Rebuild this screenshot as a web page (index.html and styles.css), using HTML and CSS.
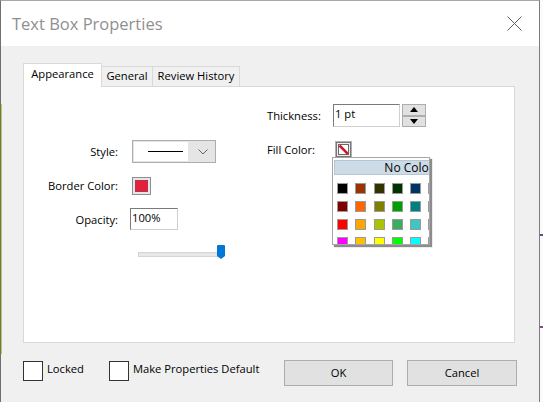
FILE: index.html
```html
<!DOCTYPE html>
<html>
<head>
<meta charset="utf-8">
<title>Text Box Properties</title>
<link rel="stylesheet" href="styles.css">
</head>
<body>
<div class="window">
  <div class="edge-green"></div>
  <header class="titlebar">
    <span class="title">Text Box Properties</span>
    <svg class="close" width="15" height="15" viewBox="0 0 15 15"><path d="M0.5 0.5 L14.5 14.5 M14.5 0.5 L0.5 14.5" stroke="#5c5c5c" stroke-width="1" fill="none"/></svg>
  </header>
  <div class="body">
    <div class="tabs">
      <div class="tab active">Appearance</div>
      <div class="tab t-general">General</div>
      <div class="tab t-review">Review History</div>
    </div>
    <div class="panel">
      <div class="col col-left">
        <div class="row row-style">
          <span class="lbl-r">Style:</span>
          <div class="combo">
            <div class="combo-val"><span class="line-sample"></span></div>
            <div class="combo-arrow"><svg width="10" height="6" viewBox="0 0 10 6"><polyline points="0.5,0.5 5,5 9.5,0.5" fill="none" stroke="#666" stroke-width="1"/></svg></div>
          </div>
        </div>
        <div class="row row-border">
          <span class="lbl-r">Border Color:</span>
          <div class="swatch-btn"><div class="swatch-red"></div></div>
        </div>
        <div class="row row-opacity">
          <span class="lbl-r">Opacity:</span>
          <div class="field field-opacity">100%</div>
        </div>
        <div class="row row-slider">
          <div class="slider">
            <div class="track"></div>
            <div class="thumb"></div>
          </div>
        </div>
      </div>
      <div class="col col-right">
        <div class="row row-thick">
          <span class="lbl-l">Thickness:</span>
          <div class="field field-thick">1 pt</div>
          <div class="spin">
            <div class="spin-btn up"></div>
            <div class="spin-btn down"></div>
          </div>
        </div>
        <div class="row row-fill">
          <span class="lbl-l">Fill Color:</span>
          <svg class="fill-btn" width="17" height="17" viewBox="0 0 17 17">
            <rect x="0.5" y="0.5" width="16" height="16" fill="#ededed" stroke="#b0b0b0"/>
            <rect x="1.5" y="1.5" width="14" height="14" fill="none" stroke="#000" stroke-dasharray="1 1"/>
            <rect x="3.5" y="3.5" width="10" height="10" fill="#fff" stroke="#6a6a6a"/>
            <path d="M4.5 4.5 L12.8 12.8" stroke="#d0182c" stroke-width="2.6"/>
          </svg>
          <div class="popup">
            <div class="pal">
              <div class="pal-head">No Color</div>
              <div class="pal-grid">
                <span class="sw" style="background:#000000"></span><span class="sw" style="background:#993300"></span><span class="sw" style="background:#333300"></span><span class="sw" style="background:#003300"></span><span class="sw" style="background:#003366"></span><span class="sw" style="background:#000080"></span><span class="sw" style="background:#333399"></span><span class="sw" style="background:#333333"></span>
                <span class="sw" style="background:#800000"></span><span class="sw" style="background:#ff6600"></span><span class="sw" style="background:#808000"></span><span class="sw" style="background:#00a000"></span><span class="sw" style="background:#008080"></span><span class="sw" style="background:#0000ff"></span><span class="sw" style="background:#666699"></span><span class="sw" style="background:#808080"></span>
                <span class="sw" style="background:#ff0000"></span><span class="sw" style="background:#ffa500"></span><span class="sw" style="background:#aac400"></span><span class="sw" style="background:#3cac60"></span><span class="sw" style="background:#40c4c4"></span><span class="sw" style="background:#3366ff"></span><span class="sw" style="background:#800080"></span><span class="sw" style="background:#999999"></span>
                <span class="sw" style="background:#ff00ff"></span><span class="sw" style="background:#ffc000"></span><span class="sw" style="background:#ffff00"></span><span class="sw" style="background:#00ff00"></span><span class="sw" style="background:#00ffff"></span><span class="sw" style="background:#00ccff"></span><span class="sw" style="background:#993366"></span><span class="sw" style="background:#c0c0c0"></span>
                <span class="sw" style="background:#ff99cc"></span><span class="sw" style="background:#ffcc99"></span><span class="sw" style="background:#ffff99"></span><span class="sw" style="background:#ccffcc"></span><span class="sw" style="background:#ccffff"></span><span class="sw" style="background:#99ccff"></span><span class="sw" style="background:#cc99ff"></span><span class="sw" style="background:#ffffff"></span>
              </div>
            </div>
          </div>
        </div>
      </div>
    </div>
    <div class="footer">
      <div class="check"><span class="box"></span><span class="check-text">Locked</span></div>
      <div class="check check-default"><span class="box"></span><span class="check-text">Make Properties Default</span></div>
      <div class="buttons">
        <div class="btn btn-ok">OK</div>
        <div class="btn btn-cancel">Cancel</div>
      </div>
    </div>
  </div>
</div>
<div class="mark mark-1"></div>
<div class="mark mark-2"></div>
</body>
</html>
```
FILE: styles.css
```css
* { box-sizing: border-box; }
html, body { margin: 0; padding: 0; }
body {
  width: 543px;
  height: 402px;
  background: #fbfbfb;
  font-family: "Open Sans", "Noto Sans", sans-serif;
  font-size: 11.2px;
  color: #000;
  position: relative;
  overflow: hidden;
}
.window {
  width: 540px;
  height: 402px;
  border-left: 1px solid #707070;
  border-right: 1px solid #7c7c7c;
  border-top: 1px solid #a8a8a8;
  background: #f0f0f0;
  position: relative;
  display: flex;
  flex-direction: column;
}
.edge-green {
  position: absolute;
  left: 0;
  top: 103px;
  width: 1px;
  height: 250px;
  background: #b8cc52;
}
.titlebar {
  height: 45px;
  flex: none;
  background: #fff;
  display: flex;
  align-items: center;
  justify-content: space-between;
  padding: 0 17px 0 11px;
}
.title {
  font-size: 16.5px;
  color: #8f8f8f;
  line-height: 20px;
  padding-top: 1px;
}
.close { display: block; }

.body {
  padding: 17px 22px 0 22px;
  display: flex;
  flex-direction: column;
}
.tabs {
  height: 23px;
  display: flex;
  align-items: flex-end;
}
.tab {
  height: 20px;
  border: 1px solid #d9d9d9;
  border-bottom: none;
  background: #f0f0f0;
  text-align: center;
  line-height: 16px;
  padding-top: 1px;
  white-space: nowrap;
}
.tab.active {
  width: 79px;
  height: 24px;
  margin-bottom: -1px;
  background: #fff;
  padding-top: 2px;
  position: relative;
  z-index: 2;
}
.t-general { width: 52px; margin-left: -1px; }
.t-review { width: 88px; margin-left: -1px; }

.panel {
  width: 492px;
  height: 257px;
  border: 1px solid #d9d9d9;
  background: #fff;
  display: flex;
  position: relative;
  z-index: 1;
}
.col { display: flex; flex-direction: column; }
.col-left { width: 243px; padding-top: 53px; }
.col-right { flex: 1; padding-top: 17px; }
.row { display: flex; align-items: center; }
.lbl-r { width: 94px; text-align: right; margin-right: 14px; white-space: nowrap; }
.lbl-l { width: 66px; white-space: nowrap; }

.row-style { height: 23px; }
.combo {
  width: 84px;
  height: 23px;
  border: 1px solid #adadad;
  background: #e5e5e5;
  padding: 1px;
  display: flex;
}
.combo-val {
  width: 54px;
  height: 19px;
  background: #fff;
  display: flex;
  align-items: center;
  padding-left: 14px;
}
.line-sample { width: 35px; height: 1px; background: #000; }
.combo-arrow {
  flex: 1;
  display: flex;
  align-items: center;
  justify-content: center;
  padding-left: 4px;
}
.combo-arrow svg { display: block; }

.row-border { height: 19px; margin-top: 13px; }
.swatch-btn {
  width: 19px;
  height: 18px;
  border: 1px solid #8f8f8f;
  background: #e6e6e6;
  padding: 2px;
}
.swatch-red {
  width: 100%;
  height: 100%;
  background: #e3213d;
  border: 1px solid #b3374a;
}

.row-opacity { height: 22px; margin-top: 13px; }
.field {
  height: 22px;
  border: 1px solid;
  border-color: #7a7a7a #cfcfcf #cfcfcf #7a7a7a;
  background: #fff;
  display: flex;
  align-items: center;
  padding: 0 0 3px 1px;
  line-height: 14px;
}
.field-opacity { width: 48px; margin-left: -2px; }

.row-slider { height: 14px; margin-top: 15px; padding-left: 114px; }
.slider { position: relative; width: 87px; height: 14px; }
.track {
  width: 83px;
  height: 5px;
  margin-top: 7px;
  background: #e7e7e7;
  border: 1px solid #d4d4d4;
}
.thumb {
  position: absolute;
  left: 79px;
  top: 0;
  width: 8px;
  height: 14px;
  background: #0078d7;
  border-radius: 1px;
  clip-path: polygon(0 0, 100% 0, 100% 78%, 50% 100%, 0 78%);
}

.row-thick { height: 23px; }
.field-thick { width: 67px; height: 23px; }
.spin {
  width: 24px;
  height: 23px;
  margin-left: 2px;
  display: flex;
  flex-direction: column;
}
.spin-btn {
  flex: 1;
  border: 1px solid #adadad;
  background: #e1e1e1;
  display: flex;
  align-items: center;
  justify-content: center;
}
.spin-btn.up::after {
  content: "";
  border-left: 4.5px solid transparent;
  border-right: 4.5px solid transparent;
  border-bottom: 5px solid #000;
}
.spin-btn.down::after {
  content: "";
  border-left: 4.5px solid transparent;
  border-right: 4.5px solid transparent;
  border-top: 5px solid #000;
}

.row-fill { height: 17px; margin-top: 14px; position: relative; }
.fill-btn { display: block; margin-left: 2px; }
.popup {
  position: absolute;
  left: 65px;
  top: 16px;
  width: 98px;
  height: 88px;
  border: 1px solid #a6a6a6;
  background: #fff;
  box-shadow: 2px 2px 1px rgba(0, 0, 0, 0.45);
  overflow: hidden;
  padding: 2px 0 0 1px;
  z-index: 3;
}
.pal { width: 150px; }
.pal-head {
  height: 15px;
  background: #cddbe6;
  border: 1px solid #b6c7d4;
  text-align: center;
  font-size: 12px;
  line-height: 13px;
  white-space: nowrap;
}
.pal-grid {
  margin-top: 8px;
  padding-left: 3px;
  display: grid;
  grid-template-columns: repeat(8, 11px);
  column-gap: 7.25px;
  row-gap: 7px;
}
.sw {
  display: block;
  width: 11px;
  height: 11px;
  border: 1px solid #9a9a9a;
}

.footer {
  margin-top: 18px;
  display: flex;
  align-items: flex-start;
}
.check { display: flex; align-items: flex-start; }
.box {
  width: 20px;
  height: 20px;
  border: 1px solid #333;
  background: #fff;
}
.check-text { margin-left: 4px; line-height: 16px; white-space: nowrap; }
.check-default { margin-left: 25px; }
.buttons {
  margin-left: auto;
  margin-top: -1px;
  display: flex;
  gap: 14px;
}
.btn {
  height: 26px;
  border: 1px solid #adadad;
  background: #e1e1e1;
  display: flex;
  align-items: center;
  justify-content: center;
  padding-bottom: 1px;
}
.btn-ok { width: 109px; }
.btn-cancel { width: 110px; }

.mark {
  position: absolute;
  left: 540px;
  width: 3px;
  height: 2px;
}
.mark-1 { top: 234px; background: #5e4a8c; }
.mark-2 { top: 326px; background: #7a4c82; }
```
